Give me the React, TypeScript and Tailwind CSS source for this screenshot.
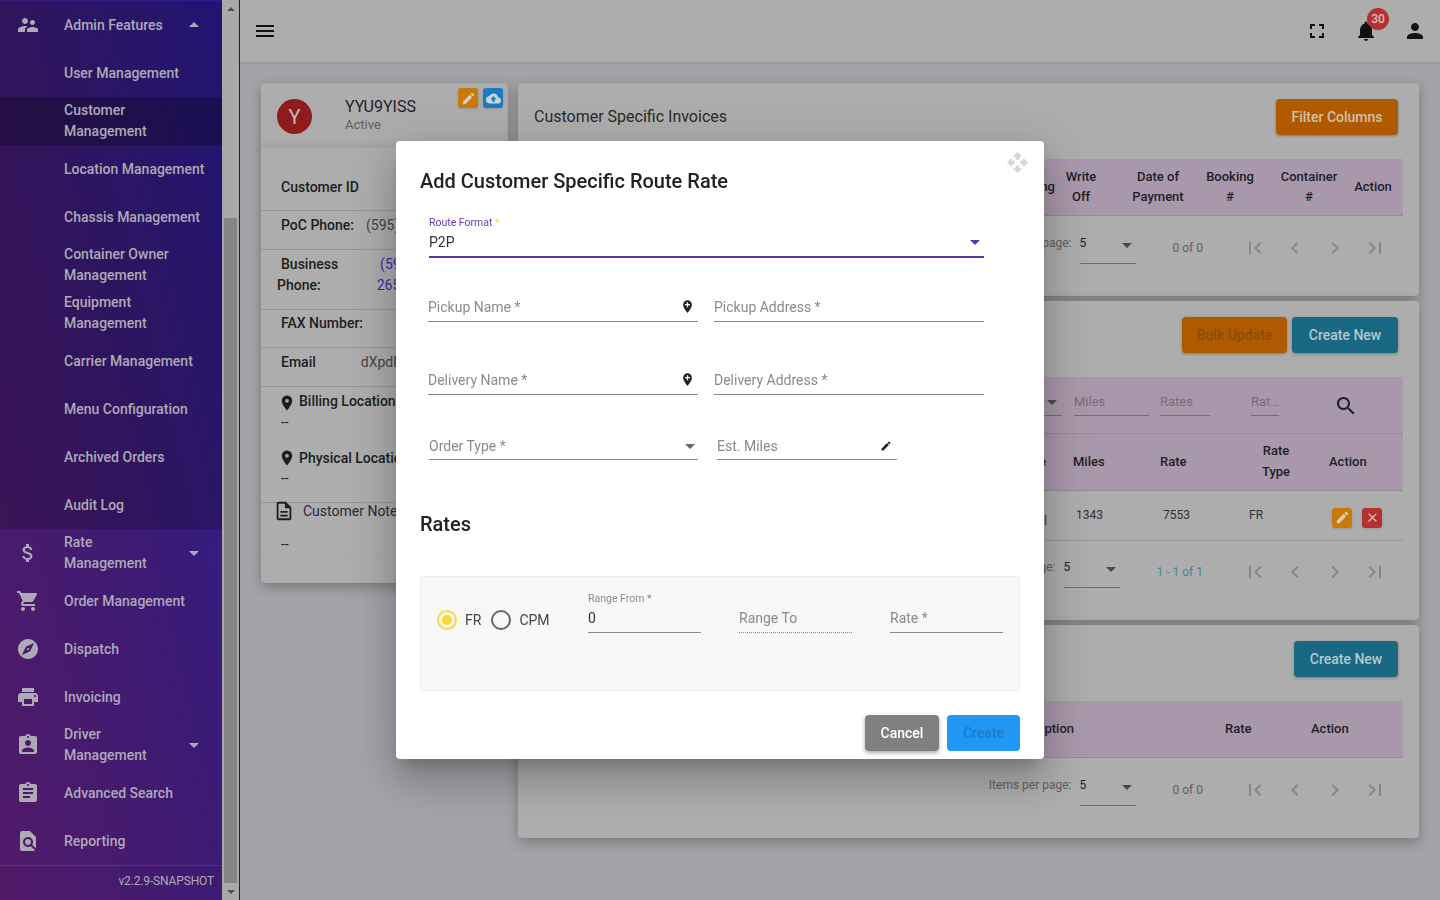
import { ReactNode } from 'react'

const paths = {
  people: 'M16.5 12c1.38 0 2.49-1.12 2.49-2.5S17.88 7 16.5 7C15.12 7 14 8.12 14 9.5s1.12 2.5 2.5 2.5zM9 11c1.66 0 2.99-1.34 2.99-3S10.66 5 9 5C7.34 5 6 6.34 6 8s1.34 3 3 3zm7.5 3c-1.83 0-5.5.92-5.5 2.75V19h11v-2.25c0-1.83-3.67-2.75-5.5-2.75zM9 13c-2.33 0-7 1.17-7 3.5V19h7v-2.25c0-.85.33-2.34 2.37-3.47C10.5 13.1 9.66 13 9 13z',
  money: 'M11.8 10.9c-2.27-.59-3-1.2-3-2.15 0-1.09 1.01-1.85 2.7-1.85 1.78 0 2.44.85 2.5 2.1h2.21c-.07-1.72-1.12-3.3-3.21-3.81V3h-3v2.16c-1.94.42-3.5 1.68-3.5 3.61 0 2.31 1.91 3.46 4.7 4.13 2.5.6 3 1.48 3 2.41 0 .69-.49 1.79-2.7 1.79-2.06 0-2.87-.92-2.98-2.1h-2.2c.12 2.19 1.76 3.42 3.68 3.83V21h3v-2.15c1.95-.37 3.5-1.5 3.5-3.55 0-2.84-2.43-3.81-4.7-4.4z',
  cart: 'M7 18c-1.1 0-1.99.9-1.99 2S5.9 22 7 22s2-.9 2-2-.9-2-2-2zM1 2v2h2l3.6 7.59-1.35 2.45c-.16.28-.25.61-.25.96 0 1.1.9 2 2 2h12v-2H7.42c-.14 0-.25-.11-.25-.25l.03-.12.9-1.63h7.45c.75 0 1.41-.41 1.75-1.03l3.58-6.49c.08-.14.12-.31.12-.48 0-.55-.45-1-1-1H5.21l-.94-2H1zm16 16c-1.1 0-1.99.9-1.99 2s.89 2 1.99 2 2-.9 2-2-.9-2-2-2z',
  explore: 'M12 10.9c-.61 0-1.1.49-1.1 1.1s.49 1.1 1.1 1.1c.61 0 1.1-.49 1.1-1.1s-.49-1.1-1.1-1.1zM12 2C6.48 2 2 6.48 2 12s4.48 10 10 10 10-4.48 10-10S17.52 2 12 2zm2.19 12.19L6 18l3.81-8.19L18 6l-3.81 8.19z',
  print: 'M19 8H5c-1.66 0-3 1.34-3 3v6h4v4h12v-4h4v-6c0-1.66-1.34-3-3-3zm-3 11H8v-5h8v5zm3-7c-.55 0-1-.45-1-1s.45-1 1-1 1 .45 1 1-.45 1-1 1zm-1-9H6v4h12V3z',
  assignInd: 'M19 3h-4.18C14.4 1.84 13.3 1 12 1c-1.3 0-2.4.84-2.82 2H5c-1.1 0-2 .9-2 2v14c0 1.1.9 2 2 2h14c1.1 0 2-.9 2-2V5c0-1.1-.9-2-2-2zm-7 0c.55 0 1 .45 1 1s-.45 1-1 1-1-.45-1-1 .45-1 1-1zm0 4c1.66 0 3 1.34 3 3s-1.34 3-3 3-3-1.34-3-3 1.34-3 3-3zm6 12H6v-1.4c0-2 4-3.1 6-3.1s6 1.1 6 3.1V19z',
  assign: 'M19 3h-4.18C14.4 1.84 13.3 1 12 1c-1.3 0-2.4.84-2.82 2H5c-1.1 0-2 .9-2 2v14c0 1.1.9 2 2 2h14c1.1 0 2-.9 2-2V5c0-1.1-.9-2-2-2zm-7 0c.55 0 1 .45 1 1s-.45 1-1 1-1-.45-1-1 .45-1 1-1zm2 14H7v-2h7v2zm3-4H7v-2h10v2zm0-4H7V7h10v2z',
  findPage: 'M20 19.59V8l-6-6H6c-1.1 0-1.99.9-1.99 2L4 20c0 1.1.89 2 1.99 2H18c.45 0 .85-.15 1.19-.4l-4.43-4.43c-.8.52-1.74.83-2.76.83-2.76 0-5-2.24-5-5s2.24-5 5-5 5 2.24 5 5c0 1.02-.31 1.96-.83 2.75L20 19.59zM9 13c0 1.66 1.34 3 3 3s3-1.34 3-3-1.34-3-3-3-3 1.34-3 3z',
  menu: 'M3 18h18v-2H3v2zm0-5h18v-2H3v2zm0-7v2h18V6H3z',
  fullscreen: 'M7 14H5v5h5v-2H7v-3zm-2-4h2V7h3V5H5v5zm12 7h-3v2h5v-5h-2v3zM14 5v2h3v3h2V5h-5z',
  bell: 'M12 22c1.1 0 2-.9 2-2h-4c0 1.1.89 2 2 2zm6-6v-5c0-3.07-1.64-5.64-4.5-6.32V4c0-.83-.67-1.5-1.5-1.5s-1.5.67-1.5 1.5v.68C7.63 5.36 6 7.92 6 11v5l-2 2v1h16v-1l-2-2z',
  person: 'M12 12c2.21 0 4-1.79 4-4s-1.79-4-4-4-4 1.79-4 4 1.79 4 4 4zm0 2c-2.67 0-8 1.34-8 4v2h16v-2c0-2.66-5.33-4-8-4z',
  edit: 'M3 17.25V21h3.75L17.81 9.94l-3.75-3.75L3 17.25zM20.71 7.04c.39-.39.39-1.02 0-1.41l-2.34-2.34c-.39-.39-1.02-.39-1.41 0l-1.83 1.83 3.75 3.75 1.83-1.83z',
  upload: 'M19.35 10.04C18.67 6.59 15.64 4 12 4 9.11 4 6.6 5.64 5.35 8.04 2.34 8.36 0 10.91 0 14c0 3.31 2.69 6 6 6h13c2.76 0 5-2.24 5-5 0-2.64-2.05-4.78-4.65-4.96zM14 13v4h-4v-4H7l5-5 5 5h-3z',
  close: 'M19 6.41L17.59 5 12 10.59 6.41 5 5 6.41 10.59 12 5 17.59 6.41 19 12 13.41 17.59 19 19 17.59 13.41 12 19 6.41z',
  search: 'M15.5 14h-.79l-.28-.27C15.41 12.59 16 11.11 16 9.5 16 5.91 13.09 3 9.5 3S3 5.91 3 9.5 5.91 16 9.5 16c1.61 0 3.09-.59 4.23-1.57l.27.28v.79l5 4.99L20.49 19l-4.99-5zm-6 0C7.01 14 5 11.99 5 9.5S7.01 5 9.5 5 14 7.01 14 9.5 11.99 14 9.5 14z',
  first: 'M18.41 16.59L13.82 12l4.59-4.59L17 6l-6 6 6 6zM6 6h2v12H6z',
  last: 'M5.59 7.41L10.18 12l-4.59 4.59L7 18l6-6-6-6zM16 6h2v12h-2z',
  left: 'M15.41 7.41L14 6l-6 6 6 6 1.41-1.41L10.83 12z',
  right: 'M10 6L8.59 7.41 13.17 12l-4.58 4.59L10 18l6-6z',
  place: 'M12 2C8.13 2 5 5.13 5 9c0 5.25 7 13 7 13s7-7.75 7-13c0-3.87-3.13-7-7-7zm0 9.5c-1.38 0-2.5-1.12-2.5-2.5s1.12-2.5 2.5-2.5 2.5 1.12 2.5 2.5-1.12 2.5-2.5 2.5z',
  addPlace: 'M12 2C8.14 2 5 5.14 5 9c0 5.25 7 13 7 13s7-7.75 7-13c0-3.86-3.14-7-7-7zm4 8h-3v3h-2v-3H8V8h3V5h2v3h3v2z',
  note: 'M8 16h8v2H8zm0-4h8v2H8zm6-10H6c-1.1 0-2 .9-2 2v16c0 1.1.89 2 1.99 2H18c1.1 0 2-.9 2-2V8l-6-6zm4 18H6V4h7v5h5v11z',
  drop: 'M7 10l5 5 5-5z',
  dropUp: 'M7 14l5-5 5 5z',
  move: 'M10 9h4V6h3l-5-5-5 5h3v3zm-1 1H6V7l-5 5 5 5v-3h3v-4zm14 2l-5-5v3h-3v4h3v3l5-5zm-9 3h-4v3H7l5 5 5-5h-3v-3z',
}

function Mi({ d, className }: { d: string; className?: string }) {
  return (
    <svg viewBox="0 0 24 24" fill="currentColor" className={className}>
      <path d={d} />
    </svg>
  )
}

const adminItems = [
  { label: 'User Management' },
  { label: 'Customer Management', selected: true },
  { label: 'Location Management' },
  { label: 'Chassis Management' },
  { label: 'Container Owner Management' },
  { label: 'Equipment Management' },
  { label: 'Carrier Management' },
  { label: 'Menu Configuration' },
  { label: 'Archived Orders' },
  { label: 'Audit Log' },
]

const mainItems = [
  { label: 'Rate Management', icon: paths.money, caret: true },
  { label: 'Order Management', icon: paths.cart },
  { label: 'Dispatch', icon: paths.explore },
  { label: 'Invoicing', icon: paths.print },
  { label: 'Driver Management', icon: paths.assignInd, caret: true },
  { label: 'Advanced Search', icon: paths.assign },
  { label: 'Reporting', icon: paths.findPage },
]

function NavRow({ label, icon, caret, up, selected }: { label: string; icon?: string; caret?: boolean; up?: boolean; selected?: boolean }) {
  return (
    <div className={`flex h-12 items-center pl-4 ${selected ? 'bg-black/25' : ''}`}>
      <div className="h-6 w-6 shrink-0">{icon && <Mi d={icon} className="h-6 w-6 text-[#adaab4]" />}</div>
      <div className={`ml-6 shrink-0 text-sm leading-[21px] font-medium text-[#adaab4] ${caret ? 'w-[106px]' : 'w-[144px]'}`}>{label}</div>
      {caret && <Mi d={up ? paths.dropUp : paths.drop} className="ml-3 h-6 w-6 shrink-0 text-[#adaab4]" />}
    </div>
  )
}

function Sidebar() {
  return (
    <aside className="flex h-full w-[222px] shrink-0 flex-col bg-gradient-to-tr from-[#521a68] via-[#3d1a74] to-[#2a1a90] pt-px">
      <div className="bg-black/20">
        <NavRow label="Admin Features" icon={paths.people} caret up />
        {adminItems.map((item) => (
          <NavRow key={item.label} label={item.label} selected={item.selected} />
        ))}
      </div>
      {mainItems.map((item) => (
        <NavRow key={item.label} {...item} />
      ))}
      <div className="flex h-[35px] items-start justify-end border-t border-white/10 pt-[7px] pr-2 text-xs tracking-[-0.15px] text-[#adaab4]">
        v2.2.9-SNAPSHOT
      </div>
    </aside>
  )
}

function FakeScrollbar() {
  return (
    <div className="flex h-full w-[18px] shrink-0 flex-col border-r border-[#222] bg-[#a9a9a9]">
      <div className="flex h-[18px] shrink-0 items-center justify-center">
        <div className="h-0 w-0 border-x-[4px] border-b-[4px] border-x-transparent border-b-[#505050]" />
      </div>
      <div className="mt-[200px] ml-[2px] h-[665px] w-[13px] bg-[#858585]" />
      <div className="mt-auto flex h-[17px] items-center justify-center">
        <div className="h-0 w-0 border-x-[4px] border-t-[4px] border-x-transparent border-t-[#505050]" />
      </div>
    </div>
  )
}

function TopBar() {
  return (
    <header className="relative z-10 flex h-[62px] shrink-0 items-center bg-[#adadad] pl-[13px] shadow-[0_1px_4px_rgba(0,0,0,0.08)]">
      <Mi d={paths.menu} className="h-6 w-6 text-[#111]" />
      <Mi d={paths.fullscreen} className="ml-auto h-6 w-6 text-[#111]" />
      <div className="relative ml-[25px] h-6 w-6">
        <Mi d={paths.bell} className="h-6 w-6 text-[#111]" />
        <span className="absolute -top-[11px] left-[1px] ml-[12px] flex h-[22px] w-[22px] items-center justify-center rounded-full bg-[#b73030] text-xs font-medium text-[#d8c0c0]">
          30
        </span>
      </div>
      <Mi d={paths.person} className="mr-[13px] ml-[25px] h-6 w-6 text-[#111]" />
    </header>
  )
}

function InfoRow({ className, children }: { className: string; children: ReactNode }) {
  return <div className={`border-b border-[#959595] text-sm text-[#1e1e1e] ${className}`}>{children}</div>
}

function CustomerCard() {
  return (
    <section className="h-[500px] w-[247px] shrink-0 overflow-hidden rounded bg-[#adadad] shadow-[0_4px_14px_rgba(0,0,0,0.28)]">
      <div className="relative flex h-[65px] items-start pt-4 pl-4">
        <div className="flex h-[35px] w-[35px] items-center justify-center rounded-full bg-[#8f1c1c] text-xl text-[#c9b5b5]">Y</div>
        <div className="ml-[33px]">
          <div className="-mt-[1px] text-base leading-[18px] text-[#1e1e2a]">YYU9YISS</div>
          <div className="text-[13px] leading-[18px] text-[#5f5f5f]">Active</div>
        </div>
        <button className="absolute top-[5px] left-[197px] flex h-5 w-5 items-center justify-center rounded-[3px] bg-[#c77a08] shadow">
          <Mi d={paths.edit} className="h-[15px] w-[15px] text-[#d9d0c0]" />
        </button>
        <button className="absolute top-[5px] left-[222px] flex h-5 w-5 items-center justify-center rounded-[3px] bg-[#1b7cc0] shadow">
          <Mi d={paths.upload} className="h-[15px] w-[15px] text-[#c8d4dc]" />
        </button>
      </div>
      <div className="shadow-[0_-3px_8px_rgba(0,0,0,0.08)]">
        <InfoRow className="flex h-[63px] items-center pt-4 pl-5 font-medium">Customer ID</InfoRow>
        <InfoRow className="flex h-[39px] items-start pt-[4px] pl-5">
          <span className="font-medium">PoC Phone:</span>
          <span className="ml-3 whitespace-nowrap text-[#444]">(595) 265-</span>
        </InfoRow>
        <InfoRow className="h-[60px] pt-[4px] leading-[21px]">
          <div className="flex pl-5">
            <span className="font-medium">Business</span>
            <span className="ml-[42px] text-[#3a2ab0]">(595)</span>
          </div>
          <div className="flex pl-4">
            <span className="font-medium">Phone:</span>
            <span className="ml-[56px] text-[#3a2ab0]">265-</span>
          </div>
        </InfoRow>
        <InfoRow className="flex h-[38px] items-start pt-[3px] pl-5 font-medium">FAX Number:</InfoRow>
        <InfoRow className="flex h-[39px] items-start pt-[4px] pl-5">
          <span className="font-medium">Email</span>
          <span className="ml-[45px] text-[#444]">dXpdR</span>
        </InfoRow>
        <div className="border-b border-[#959595] text-sm text-[#1e1e1e]">
          <div className="flex h-[25px] items-end whitespace-nowrap pl-[17px] font-medium">
            <Mi d={paths.place} className="h-[18px] w-[18px] shrink-0" />
            <span className="ml-[3px] leading-[21px]">Billing Location</span>
          </div>
          <div className="h-[35px] pl-5 leading-[21px]">--</div>
          <div className="flex h-[21px] items-center whitespace-nowrap pl-[17px] font-medium">
            <Mi d={paths.place} className="h-[18px] w-[18px] shrink-0" />
            <span className="ml-[3px]">Physical Location</span>
          </div>
          <div className="h-[34px] pl-5 leading-[21px]">--</div>
        </div>
        <div className="flex h-4 items-center pl-3 text-sm whitespace-nowrap text-[#2a2a3a]">
          <Mi d={paths.note} className="h-[22px] w-[22px] shrink-0 text-[#1e1e1e]" />
          <span className="ml-2">Customer Notes</span>
        </div>
        <div className="mt-[15px] pl-5 text-sm leading-[21px] text-[#1e1e1e]">--</div>
      </div>
    </section>
  )
}

function Paginator({ range, labelText, rangeClass, className }: { range: string; labelText: string; rangeClass: string; className: string }) {
  return (
    <div className={`flex items-center justify-end ${className}`}>
      <span className="mb-[10px] whitespace-nowrap text-xs text-[#5f5f5f]">{labelText}</span>
      <div className="ml-2 flex h-8 w-14 items-start justify-between border-b border-[#6f6f6f] pt-[1px] text-xs leading-5 text-[#222]">
        5
        <Mi d={paths.drop} className="-mr-[3px] h-6 w-6 text-[#4a4a4a]" />
      </div>
      <span className={`mr-8 ml-[37px] text-xs whitespace-nowrap ${rangeClass}`}>{range}</span>
      {[paths.first, paths.left, paths.right, paths.last].map((d) => (
        <div key={d} className="flex w-10 justify-center">
          <Mi d={d} className="h-6 w-6 text-[#878787]" />
        </div>
      ))}
    </div>
  )
}

function ActionButton({ label, className }: { label: string; className: string }) {
  return (
    <button className={`flex h-9 items-center justify-center rounded text-sm font-medium shadow-[0_1px_3px_rgba(0,0,0,0.3)] ${className}`}>
      {label}
    </button>
  )
}

function TableCard({ header, children, className }: { header: ReactNode; children: ReactNode; className: string }) {
  return (
    <section className={`rounded bg-[#adadad] shadow-[0_4px_14px_rgba(0,0,0,0.28)] ${className}`}>
      <div className="flex h-[60px] items-center justify-end pt-2 pr-[21px] pl-4">{header}</div>
      <div className="px-4 pt-4">{children}</div>
    </section>
  )
}

function InvoicesCard() {
  return (
    <TableCard
      className="h-[213px]"
      header={
        <>
          <span className="mr-auto text-base text-[#2a2a2a]">Customer Specific Invoices</span>
          <ActionButton label="Filter Columns" className="w-[122px] bg-[#b05a00] pb-[1px] text-[#d0c0aa]" />
        </>
      }
    >
      <div className="flex h-[57px] items-center justify-end border-b border-[#958a9a] bg-[#a998ab] text-center text-[13px] leading-5 font-medium text-[#1e1e2a]">
        <div className="w-[70px] text-right">Pending</div>
        <div className="ml-[3px] w-[46px]">Write Off</div>
        <div className="ml-[27px] w-[54px]">Date of Payment</div>
        <div className="w-[90px]">
          Booking
          <br />#
        </div>
        <div className="w-[68px]">
          Container
          <br />#
        </div>
        <div className="w-[60px]">Action</div>
      </div>
      <Paginator range="0 of 0" labelText="Items per page:" rangeClass="text-[#5f5f5f]" className="mt-4 pr-2" />
    </TableCard>
  )
}

function RoutesCard() {
  return (
    <TableCard
      className="h-[319px]"
      header={
        <>
          <ActionButton label="Bulk Update" className="w-[105px] bg-[#b05a00] pb-[1px] text-[#8c4a06]" />
          <ActionButton label="Create New" className="ml-[5px] w-[106px] bg-[#196884] pb-[1px] text-[#b4c8d0]" />
        </>
      }
    >
      <div className="flex h-[57px] items-start justify-end border-b border-[#958a9a] bg-[#a998ab] pr-[39px] text-[13px] text-[#7a6a7c]">
        <div className="mt-[3px] flex h-[36px] w-[60px] justify-end border-b border-[#7a6a7c] pt-[10px]">
          <Mi d={paths.drop} className="-mr-[2px] h-6 w-6 text-[#4a4a4a]" />
        </div>
        <div className="mt-[13px] ml-3 h-[26px] w-[75px] border-b border-[#7a6a7c] pt-[2px]">Miles</div>
        <div className="mt-[13px] ml-[11px] h-[26px] w-[50px] border-b border-[#7a6a7c] pt-[2px]">Rates</div>
        <div className="mt-[13px] ml-[41px] h-[26px] w-[28px] border-b border-[#7a6a7c] pt-[2px] whitespace-nowrap">Rat…</div>
        <Mi d={paths.search} className="mt-[17px] mr-[6px] ml-[55px] h-6 w-6 text-[#1e1e2a]" />
      </div>
      <div className="flex h-[57px] items-center justify-end border-b border-[#958a9a] bg-[#a998ab] pb-[1px] text-[13px] leading-[21px] font-medium text-[#1e1e2a]">
        <div className="w-[45px] text-right">Route</div>
        <div className="ml-[27px] w-[87px]">Miles</div>
        <div className="w-[67px]">Rate</div>
        <div className="w-[100px] pr-[2px] pb-[2px] text-center">
          Rate
          <br />
          Type
        </div>
        <div className="ml-[2px] w-[74px]">Action</div>
      </div>
      <div className="flex h-[50px] items-center justify-end border-b border-[#959595] pb-[2px] text-xs text-[#333]">
        <div className="w-[47px] pt-3 text-right">Local</div>
        <div className="ml-[29px] w-[87px]">1343</div>
        <div className="w-[86px]">7553</div>
        <div className="w-[83px]">FR</div>
        <button className="mt-[6px] flex h-5 w-5 items-center justify-center rounded-[3px] bg-[#c77a08] shadow">
          <Mi d={paths.edit} className="h-[15px] w-[15px] text-[#d9d0c0]" />
        </button>
        <button className="mt-[6px] mr-[21px] ml-[10px] flex h-5 w-5 items-center justify-center rounded-[3px] bg-[#b73030] shadow">
          <Mi d={paths.close} className="h-[15px] w-[15px] text-[#d8c0c0]" />
        </button>
      </div>
      <Paginator range="1 - 1 of 1" labelText="Items per page:" rangeClass="text-[#4f828f]" className="mt-[15px] pr-2" />
    </TableCard>
  )
}

function DescriptionCard() {
  return (
    <TableCard
      className="h-[213px]"
      header={<ActionButton label="Create New" className="w-[104px] bg-[#196884] pb-[1px] text-[#b4c8d0]" />}
    >
      <div className="flex h-[57px] items-center justify-end border-b border-[#958a9a] bg-[#a998ab] text-[13px] font-medium text-[#1e1e2a]">
        <div className="w-[80px] text-right">Description</div>
        <div className="ml-[151px] w-[86px]">Rate</div>
        <div className="w-[92px]">Action</div>
      </div>
      <Paginator range="0 of 0" labelText="Items per page:" rangeClass="text-[#5f5f5f]" className="mt-4 pr-2" />
    </TableCard>
  )
}

function TextField({ label, icon, className }: { label: string; icon?: string; className: string }) {
  return (
    <div className={`flex h-[25px] items-start justify-between border-b border-[#8a8a8a] text-sm leading-5 text-[#8a8a8a] ${className}`}>
      {label}
      {icon && <Mi d={icon} className="mt-[2px] mr-[3px] h-[15px] w-[15px] text-[#222]" />}
    </div>
  )
}

function Radio({ on }: { on?: boolean }) {
  return (
    <div className={`flex h-5 w-5 shrink-0 items-center justify-center rounded-full border-2 ${on ? 'border-[#fdd835]' : 'border-[#666]'}`}>
      {on && <div className="h-[10px] w-[10px] rounded-full bg-[#fdd835]" />}
    </div>
  )
}

function RouteRateDialog() {
  return (
    <div className="fixed top-[141px] left-[396px] z-20 h-[618px] w-[648px] rounded bg-white px-6 pt-6 shadow-[0_11px_15px_-7px_rgba(0,0,0,0.2),0_24px_38px_3px_rgba(0,0,0,0.14),0_9px_46px_8px_rgba(0,0,0,0.12)]">
      <Mi d={paths.move} className="absolute top-[10px] right-[15px] h-[23px] w-[23px] text-[#d6d6d6]" />
      <h2 className="text-xl leading-8 font-medium text-[#212121]">Add Customer Specific Route Rate</h2>

      <div className="mt-[19px] ml-[9px] w-[555px] border-b-2 border-[#5e35b1]">
        <div className="pt-[1px] text-[10.5px] leading-3 text-[#673ab7]">
          Route Format <span className="text-[#fdd835]">*</span>
        </div>
        <div className="mt-[3px] flex h-6 justify-between text-sm leading-5 text-[#333]">
          P2P
          <Mi d={paths.drop} className="-mt-[2px] -mr-[3px] h-6 w-6 text-[#5e35b1]" />
        </div>
      </div>

      <div className="mt-[39px] ml-2 flex gap-4">
        <TextField label="Pickup Name *" icon={paths.addPlace} className="w-[270px]" />
        <TextField label="Pickup Address *" className="w-[270px]" />
      </div>
      <div className="mt-[48px] ml-2 flex gap-4">
        <TextField label="Delivery Name *" icon={paths.addPlace} className="w-[270px]" />
        <TextField label="Delivery Address *" className="w-[270px]" />
      </div>
      <div className="mt-[41px] ml-[9px] flex gap-[19px]">
        <div className="flex h-[24px] w-[269px] items-start justify-between border-b border-[#8a8a8a] text-sm leading-5 text-[#8a8a8a]">
          Order Type *
          <Mi d={paths.drop} className="-mt-[2px] -mr-[4px] h-6 w-6 text-[#666]" />
        </div>
        <div className="flex h-[24px] w-[180px] items-start justify-between border-b border-[#8a8a8a] text-sm leading-5 text-[#8a8a8a]">
          Est. Miles
          <Mi d={paths.edit} className="mt-[4px] mr-[5px] h-3 w-3 text-[#222]" />
        </div>
      </div>

      <h3 className="mt-[48px] text-xl leading-8 font-medium text-[#212121]">Rates</h3>

      <div className="mt-[36px] flex h-[115px] items-start border border-[#eeeeee] bg-[#f7f7f7]">
        <div className="mt-[33px] ml-4 flex w-[151px] shrink-0 items-center text-sm text-[#444]">
          <Radio on />
          <span className="ml-2">FR</span>
          <div className="ml-[10px]">
            <Radio />
          </div>
          <span className="ml-2">CPM</span>
        </div>
        <div className="mt-[15px] w-[113px] shrink-0 border-b border-[#8a8a8a] pb-1">
          <div className="h-4 pt-[1px] text-[10.5px] leading-3 text-[#8a8a8a]">Range From *</div>
          <div className="text-sm leading-5 text-[#333]">0</div>
        </div>
        <div className="mt-[31px] ml-[38px] w-[113px] shrink-0 border-b border-dotted border-[#8a8a8a] pb-1 text-sm leading-5 text-[#8a8a8a]">Range To</div>
        <div className="mt-[31px] ml-[38px] w-[113px] shrink-0 border-b border-[#8a8a8a] pb-1 text-sm leading-5 text-[#8a8a8a]">Rate *</div>
      </div>

      <div className="mt-6 flex justify-end gap-2">
        <button className="h-9 w-[74px] rounded bg-[#808080] pb-[1px] text-sm font-medium text-white shadow-[0_2px_4px_rgba(0,0,0,0.35)]">Cancel</button>
        <button className="h-9 w-[73px] rounded bg-[#2196f3] pb-[1px] text-sm font-medium text-[#1c7cc8]">Create</button>
      </div>
    </div>
  )
}

export default function App() {
  return (
    <div className="flex h-[900px] w-[1440px] overflow-hidden bg-[#a3a4a8] [font-family:Roboto,sans-serif]">
      <Sidebar />
      <FakeScrollbar />
      <main className="flex min-w-0 flex-1 flex-col">
        <TopBar />
        <div className="flex gap-[10px] px-[21px] pt-[21px]">
          <CustomerCard />
          <div className="flex min-w-0 flex-1 flex-col gap-[5px]">
            <InvoicesCard />
            <RoutesCard />
            <DescriptionCard />
          </div>
        </div>
      </main>
      <RouteRateDialog />
    </div>
  )
}
